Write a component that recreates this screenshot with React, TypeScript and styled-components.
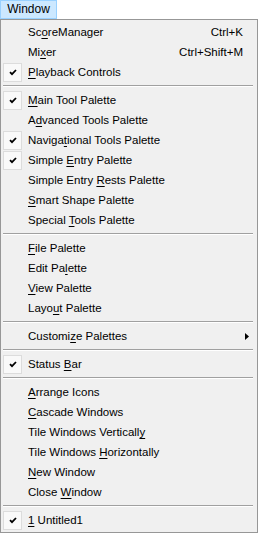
import React from "react";
import styled, { createGlobalStyle } from "styled-components";

const Global = createGlobalStyle`
  html, body { margin: 0; padding: 0; background: #ffffff; }
  body { font-family: "Liberation Sans", Arial, sans-serif; font-size: 11.5px; color: #000; }
`;

const Page = styled.div`
  width: 258px;
  height: 533px;
  display: flex;
  flex-direction: column;
`;

const MenuBar = styled.div`
  height: 19px;
  display: flex;
  background: #ffffff;
`;

const BarItem = styled.div`
  box-sizing: border-box;
  width: 57px;
  height: 19px;
  background: #cce8ff;
  border: 1px solid #99d1ff;
  display: flex;
  align-items: center;
  justify-content: center;
  font-size: 12px;
  padding-bottom: 1px;
`;

const Popup = styled.div`
  box-sizing: border-box;
  width: 258px;
  height: 514px;
  background: #f0f0f0;
  border: 1px solid #979797;
  padding: 2px 0;
  display: flex;
  flex-direction: column;
`;

const Row = styled.div`
  height: 20px;
  display: grid;
  grid-template-columns: 27px 1fr auto 14px;
  align-items: center;
`;

const Gutter = styled.div`
  display: flex;
  align-items: center;
  justify-content: flex-start;
  padding-left: 2px;
`;

const CheckBox = styled.div`
  box-sizing: border-box;
  width: 19px;
  height: 19px;
  background: #f9f9f9;
  border: 1px solid #dcdcdc;
  display: flex;
  align-items: center;
  justify-content: center;
`;

const Label = styled.span`
  white-space: nowrap;
`;

const Key = styled.span`
  text-decoration: underline;
  text-underline-offset: 2px;
`;

const Shortcut = styled.span`
  white-space: nowrap;
  text-align: right;
`;

const Arrow = styled.div`
  display: flex;
  align-items: center;
  justify-content: flex-start;
  padding-left: 2px;
`;

const Separator = styled.div`
  height: 0;
  margin: 3px 4px 3px 2px;
  border-top: 1px solid #a0a0a0;
  border-bottom: 1px solid #ffffff;
`;

type Item = {
  label: string;
  key?: number;
  checked?: boolean;
  shortcut?: string;
  sub?: boolean;
};

const Check = () => (
  <svg width="8" height="7" viewBox="0 0 8 7">
    <path d="M1 3.2 L3 5.2 L7 1" fill="none" stroke="#000" strokeWidth="1.8" />
  </svg>
);

const SubArrow = () => (
  <svg width="4" height="7" viewBox="0 0 4 7">
    <path d="M0 0 L4 3.5 L0 7 Z" fill="#000" />
  </svg>
);

const groups: Item[][] = [
  [
    { label: "ScoreManager", key: 2, shortcut: "Ctrl+K" },
    { label: "Mixer", key: 2, shortcut: "Ctrl+Shift+M" },
    { label: "Playback Controls", key: 0, checked: true },
  ],
  [
    { label: "Main Tool Palette", key: 0, checked: true },
    { label: "Advanced Tools Palette", key: 1 },
    { label: "Navigational Tools Palette", key: 6, checked: true },
    { label: "Simple Entry Palette", key: 7, checked: true },
    { label: "Simple Entry Rests Palette", key: 13 },
    { label: "Smart Shape Palette", key: 0 },
    { label: "Special Tools Palette", key: 8 },
  ],
  [
    { label: "File Palette", key: 0 },
    { label: "Edit Palette", key: 7 },
    { label: "View Palette", key: 0 },
    { label: "Layout Palette", key: 4 },
  ],
  [{ label: "Customize Palettes", key: 7, sub: true }],
  [{ label: "Status Bar", key: 7, checked: true }],
  [
    { label: "Arrange Icons", key: 0 },
    { label: "Cascade Windows", key: 0 },
    { label: "Tile Windows Vertically", key: 22 },
    { label: "Tile Windows Horizontally", key: 13 },
    { label: "New Window", key: 0 },
    { label: "Close Window", key: 6 },
  ],
  [{ label: "1 Untitled1", key: 0, checked: true }],
];

const renderLabel = (label: string, key?: number) => {
  if (key === undefined) return label;
  return (
    <>
      {label.slice(0, key)}
      <Key>{label[key]}</Key>
      {label.slice(key + 1)}
    </>
  );
};

const MenuRow = ({ item }: { item: Item }) => (
  <Row>
    <Gutter>
      {item.checked && (
        <CheckBox>
          <Check />
        </CheckBox>
      )}
    </Gutter>
    <Label>{renderLabel(item.label, item.key)}</Label>
    <Shortcut>{item.shortcut ?? ""}</Shortcut>
    <Arrow>{item.sub && <SubArrow />}</Arrow>
  </Row>
);

export default function App() {
  return (
    <Page>
      <Global />
      <MenuBar>
        <BarItem>Window</BarItem>
      </MenuBar>
      <Popup>
        {groups.map((g, gi) => (
          <React.Fragment key={gi}>
            {gi > 0 && <Separator />}
            {g.map((it) => (
              <MenuRow key={it.label} item={it} />
            ))}
          </React.Fragment>
        ))}
      </Popup>
    </Page>
  );
}
